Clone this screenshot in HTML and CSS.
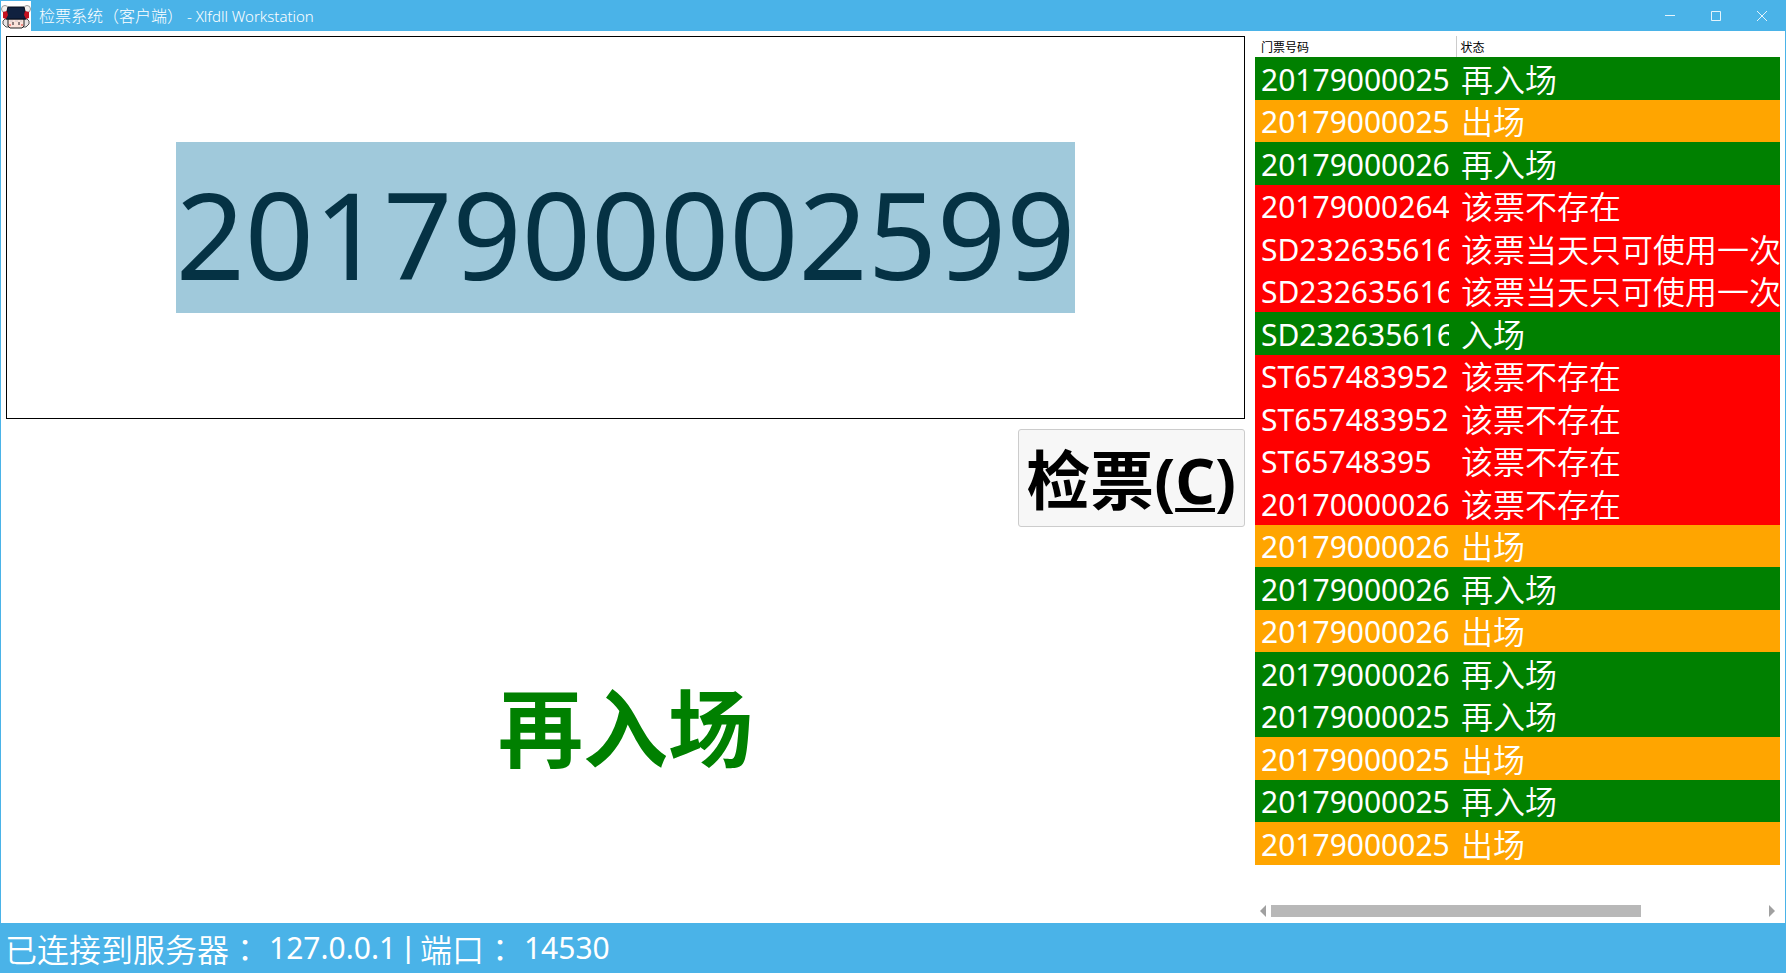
FILE: index.html
```html
<!DOCTYPE html>
<html lang="zh-CN">
<head>
<meta charset="utf-8">
<title>检票系统（客户端） - Xlfdll Workstation</title>
<link rel="stylesheet" href="styles.css">
</head>
<body>
<div class="window">
  <header class="titlebar">
    <svg class="app-icon" viewBox="0 0 30 30" aria-hidden="true">
      <rect width="30" height="30" fill="#fff"/>
      <circle cx="4" cy="8" r="3.500" fill="#f4f0ee" stroke="#999" stroke-width="1"/>
      <circle cx="26" cy="8" r="3.500" fill="#f4f0ee" stroke="#999" stroke-width="1"/>
      <path d="M4 18h4v8H5l-3-3v-3zM26 18h-4v8h3l3-3v-3z" fill="#e9e4e4" stroke="#555" stroke-width="1"/>
      <path d="M7 18h16v7l-2 2H9l-2-2z" fill="#fbe3da" stroke="#222" stroke-width="1"/>
      <path d="M7 6h16l2 8v4H5v-4z" fill="#10213f" stroke="#050c1a" stroke-width="1"/>
      <path d="M2 11l4-1 1 4-2 4-3-1zM28 11l-4-1-1 4 2 4 3-1z" fill="#c4121f"/>
      <path d="M9 20h3M14 20h3M19 20h2" stroke="#cfc6ca"/>
      <path d="M12 21v3M18 21v3" stroke="#221c22" stroke-width="1"/>
      <path d="M8 24h2M20 24h2" stroke="#f28d86" stroke-width="2"/>
    </svg>
    <h1 class="title">检票系统（客户端）<span class="title-latin"> - Xlfdll Workstation</span></h1>
    <div class="window-controls">
      <button type="button" class="window-button" aria-label="最小化"><svg viewBox="0 0 10 10"><path d="M0 4.500h10"/></svg></button>
      <button type="button" class="window-button" aria-label="最大化"><svg viewBox="0 0 10 10"><path d="M.5.5h9v9h-9z"/></svg></button>
      <button type="button" class="window-button" aria-label="关闭"><svg viewBox="0 0 10 10"><path d="M0 0l10 10M10 0L0 10"/></svg></button>
    </div>
  </header>

  <main class="content">
    <section class="check">
      <div class="ticket-box">
        <input class="ticket-input" type="text" value="2017900002599" aria-label="门票号码">
      </div>
      <button type="button" class="check-button" accesskey="c">检票<span class="check-key">(<u>C</u>)</span></button>
      <output class="result">再入场</output>
    </section>

    <section class="history">
      <table class="log">
        <colgroup><col class="col-number"><col></colgroup>
        <thead>
          <tr><th scope="col">门票号码</th><th scope="col">状态</th></tr>
        </thead>
        <tbody>
          <tr class="enter"><td><div class="number">20179000025</div></td><td>再入场</td></tr>
          <tr class="leave"><td><div class="number">20179000025</div></td><td>出场</td></tr>
          <tr class="enter"><td><div class="number">20179000026</div></td><td>再入场</td></tr>
          <tr class="error"><td><div class="number">20179000264</div></td><td>该票不存在</td></tr>
          <tr class="error"><td><div class="number">SD232635616</div></td><td>该票当天只可使用一次</td></tr>
          <tr class="error"><td><div class="number">SD232635616</div></td><td>该票当天只可使用一次</td></tr>
          <tr class="enter"><td><div class="number">SD232635616</div></td><td>入场</td></tr>
          <tr class="error"><td><div class="number">ST657483952</div></td><td>该票不存在</td></tr>
          <tr class="error"><td><div class="number">ST657483952</div></td><td>该票不存在</td></tr>
          <tr class="error"><td><div class="number">ST65748395</div></td><td>该票不存在</td></tr>
          <tr class="error"><td><div class="number">20170000026</div></td><td>该票不存在</td></tr>
          <tr class="leave"><td><div class="number">20179000026</div></td><td>出场</td></tr>
          <tr class="enter"><td><div class="number">20179000026</div></td><td>再入场</td></tr>
          <tr class="leave"><td><div class="number">20179000026</div></td><td>出场</td></tr>
          <tr class="enter"><td><div class="number">20179000026</div></td><td>再入场</td></tr>
          <tr class="enter"><td><div class="number">20179000025</div></td><td>再入场</td></tr>
          <tr class="leave"><td><div class="number">20179000025</div></td><td>出场</td></tr>
          <tr class="enter"><td><div class="number">20179000025</div></td><td>再入场</td></tr>
          <tr class="leave"><td><div class="number">20179000025</div></td><td>出场</td></tr>
        </tbody>
      </table>
      <div class="scrollbar">
        <svg class="arrow" viewBox="0 0 6 12" aria-hidden="true"><path d="M6 0v12L0 6z"/></svg>
        <div class="track"><div class="thumb"></div></div>
        <svg class="arrow" viewBox="0 0 6 12" aria-hidden="true"><path d="M0 0v12l6-6z"/></svg>
      </div>
    </section>
  </main>

  <footer class="statusbar">
    <span>已连接到服务器<span class="colon" lang="zh-Hant">：</span></span><span class="latin">127.0.0.1</span><span class="bar">|</span><span>端口<span class="colon" lang="zh-Hant">：</span></span><span class="latin">14530</span>
  </footer>
</div>
</body>
</html>
```
FILE: styles.css
```css
* {
  box-sizing: border-box;
}

body {
  margin: 0;
  font-family: "Noto Sans", "Noto Sans CJK SC", sans-serif;
  color: #000;
}

.window {
  display: flex;
  flex-direction: column;
  min-height: 100vh;
  background: #4ab3e8;
}

.titlebar {
  display: flex;
  align-items: center;
  height: 31px;
  padding: 1px 1px 0;
  color: #fff;
}

.app-icon {
  width: 30px;
  height: 30px;
}

.title {
  flex: 1;
  margin: 0 0 0 8px;
  padding-bottom: 2px;
  font: 300 16px/28px "Noto Sans CJK SC", sans-serif;
}

.title-latin {
  font: 300 15px/28px "Noto Sans", sans-serif;
}

.window-controls {
  display: flex;
}

.window-button {
  display: grid;
  place-items: center;
  width: 46px;
  height: 30px;
  padding: 0;
  border: 0;
  background: none;
}

.window-button svg {
  width: 10px;
  height: 10px;
  fill: none;
  stroke: #e4f4fc;
  stroke-width: 1;
}

.content {
  flex: 1;
  display: grid;
  grid-template-columns: minmax(0, 1239fr) minmax(0, 525fr);
  column-gap: 10px;
  margin: 0 1px;
  padding: 5px;
  background: #fff;
}

.check {
  display: flex;
  flex-direction: column;
  gap: 10px;
}

.ticket-box {
  display: grid;
  place-items: center;
  height: 383px;
  border: 1px solid #000;
}

.ticket-input {
  width: 13ch;
  height: 171px;
  padding: 10px 0 0;
  border: 0;
  outline: 0;
  background: #a0c9db;
  color: #053244;
  font: 121px/160px "Noto Sans", sans-serif;
  text-align: center;
}

.check-button {
  align-self: flex-end;
  height: 98px;
  padding: 0 8px 0 7px;
  border: 1px solid #ccc;
  border-radius: 3px;
  background: #f7f7f7;
  color: #000;
  font: bold 64px/90px "Noto Sans CJK SC", sans-serif;
}

.check-key {
  font-family: "Noto Sans", sans-serif;
  font-size: 62px;
}

.check-key u {
  text-decoration-thickness: 4px;
  text-underline-offset: 4px;
}

.result {
  flex: 1;
  display: grid;
  place-items: center;
  padding-bottom: 8px;
  color: #008000;
  font: bold 85px/120px "Noto Sans CJK SC", sans-serif;
}

.history {
  display: flex;
  flex-direction: column;
  justify-content: space-between;
}

.log {
  width: 100%;
  table-layout: fixed;
  border-collapse: collapse;
}

.col-number {
  width: 201px;
}

.log th {
  height: 21px;
  padding: 0 4px;
  font: 400 12px/20px "Noto Sans CJK SC", sans-serif;
  text-align: left;
}

.log th:first-child {
  padding-left: 6px;
  border-right: 1px solid #ccc;
}

.log td {
  height: 42px;
  padding: 0 0 2px 5px;
  color: #fff;
  font: 350 32px/40px "Noto Sans CJK SC", sans-serif;
  white-space: nowrap;
}

.log td:first-child {
  padding: 0 0 0 6px;
}

.log tbody tr:nth-child(odd) td {
  height: 43px;
}

.number {
  width: 188px;
  overflow: hidden;
  padding-top: 1px;
  font: 30px/41px "Noto Sans", sans-serif;
}

.enter {
  background: #008000;
}

.leave {
  background: #ffa500;
}

.error {
  background: #f00;
}

.scrollbar {
  display: flex;
  gap: 5px;
  padding: 0 5px 1px;
}

.arrow {
  width: 6px;
  height: 12px;
  fill: #a0a0a0;
}

.track {
  flex: 1;
}

.thumb {
  width: 75%;
  height: 12px;
  background: #b8b8b8;
}

.statusbar {
  display: flex;
  align-items: center;
  gap: 8px;
  height: 50px;
  padding: 0 5px;
  color: #fff;
  font: 350 32px/48px "Noto Sans CJK SC", sans-serif;
}

.colon {
  font-family: "Noto Sans CJK TC", sans-serif;
}

.latin {
  font: 30px/48px "Noto Sans", sans-serif;
}

.bar {
  font: 30px/48px "Liberation Sans", sans-serif;
}
```
